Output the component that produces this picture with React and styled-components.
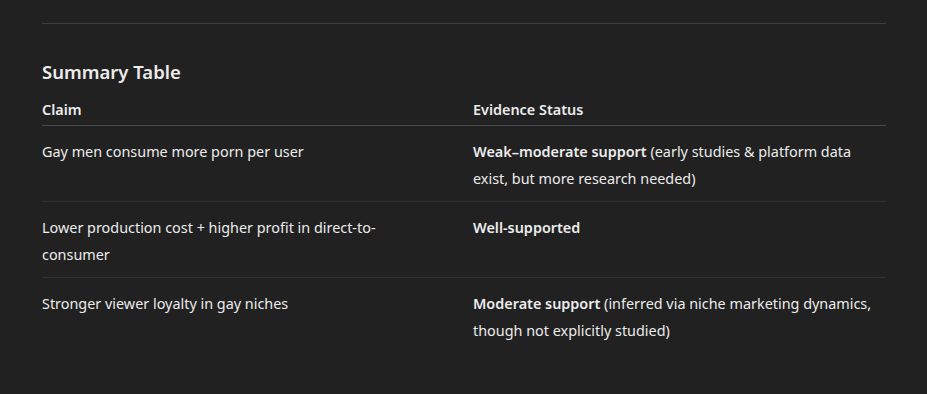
import React from 'react'
import styled, { createGlobalStyle } from 'styled-components'

const GlobalStyle = createGlobalStyle`
  html, body {
    margin: 0;
    background: #212121;
  }
  body {
    font-family: "Noto Sans", "Open Sans", sans-serif;
    color: #ececec;
  }
`

const Page = styled.div`
  padding: 23px 41px 40px 42px;
`

const Rule = styled.hr`
  border: none;
  height: 1px;
  background: #3d3d3d;
  margin: 0 0 34px 0;
`

const Heading = styled.h3`
  font-size: 18.5px;
  font-weight: 600;
  margin: 0 0 13px 0;
  line-height: 28px;
`

const Table = styled.table`
  width: 100%;
  border-collapse: collapse;
  font-size: 14.4px;
  table-layout: fixed;
`

const HeadCell = styled.th`
  text-align: left;
  font-weight: 600;
  line-height: 22px;
  padding: 0 ${p => p.$gap || '0'} 4px 0;
  border-bottom: 1px solid #4a4a4a;
  width: ${p => p.$width || 'auto'};
`

const Row = styled.tr`
  & + & td {
    border-top: 1px solid #303030;
  }
`

const Cell = styled.td`
  vertical-align: top;
  line-height: 27px;
  padding: 12px ${p => p.$gap || '0'} 9px 0;
`

const Strong = styled.strong`
  font-weight: 600;
`

const rows = [
  {
    claim: 'Gay men consume more porn per user',
    status: 'Weak–moderate support',
    note: ' (early studies & platform data exist, but more research needed)'
  },
  {
    claim: 'Lower production cost + higher profit in direct-to-consumer',
    status: 'Well-supported',
    note: ''
  },
  {
    claim: 'Stronger viewer loyalty in gay niches',
    status: 'Moderate support',
    note: ' (inferred via niche marketing dynamics, though not explicitly studied)'
  }
]

export default function App() {
  return (
    <>
      <GlobalStyle />
      <Page>
        <Rule />
        <Heading>Summary Table</Heading>
        <Table>
          <thead>
            <tr>
              <HeadCell $width="391px" $gap="40px">Claim</HeadCell>
              <HeadCell>Evidence Status</HeadCell>
            </tr>
          </thead>
          <tbody>
            {rows.map(r => (
              <Row key={r.claim}>
                <Cell $gap="40px">{r.claim}</Cell>
                <Cell>
                  <Strong>{r.status}</Strong>
                  {r.note}
                </Cell>
              </Row>
            ))}
          </tbody>
        </Table>
      </Page>
    </>
  )
}
